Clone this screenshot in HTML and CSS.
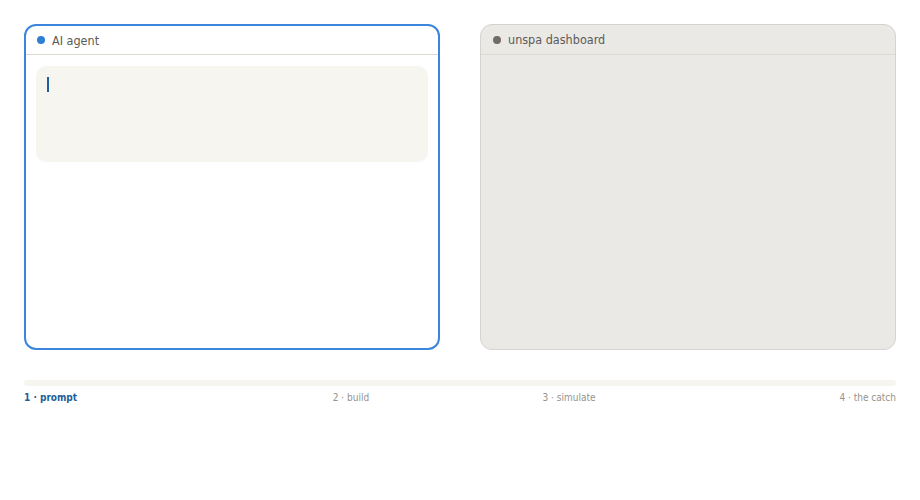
FILE: index.html
```html
<!DOCTYPE html>
<html>
<head>
<meta charset="utf-8">
<link rel="stylesheet" href="styles.css">
</head>
<body>
<div class="page">
  <div class="panels">
    <div class="card card-agent">
      <div class="card-head"><span class="dot dot-blue"></span><span class="title">AI agent</span></div>
      <div class="card-body">
        <div class="prompt"><span class="caret"></span></div>
      </div>
    </div>
    <div class="card card-dash">
      <div class="card-head"><span class="dot dot-grey"></span><span class="title">unspa dashboard</span></div>
      <div class="card-body"></div>
    </div>
  </div>
  <div class="progress"></div>
  <div class="steps">
    <span class="step step-1 active">1 · prompt</span>
    <span class="step step-2">2 · build</span>
    <span class="step step-3">3 · simulate</span>
    <span class="step step-4">4 · the catch</span>
  </div>
</div>
</body>
</html>
```

FILE: styles.css
```css
html, body {
  margin: 0;
  padding: 0;
  background: #ffffff;
  font-family: "DejaVu Sans Condensed", "DejaVu Sans", "Liberation Sans", sans-serif;
  font-stretch: condensed;
}
.page {
  padding: 24px;
  width: 872px;
}
.panels {
  display: grid;
  grid-template-columns: 416px 416px;
  gap: 40px;
}
.card {
  height: 326px;
  box-sizing: border-box;
  border-radius: 12px;
  display: flex;
  flex-direction: column;
  overflow: hidden;
}
.card-agent {
  border: 2px solid #3a86dc;
  background: #ffffff;
}
.card-dash {
  border: 1px solid #d5d3cd;
  background: #eae9e6;
}
.card-head {
  height: 29px;
  display: flex;
  align-items: center;
  padding-left: 12px;
  border-bottom: 1px solid #dcdad3;
  flex-shrink: 0;
}
.card-agent .card-head {
  height: 28px;
  padding-left: 11px;
}
.dot {
  width: 8px;
  height: 8px;
  border-radius: 50%;
  margin-right: 7px;
}
.dot-blue { background: #2f7fd6; }
.dot-grey { background: #6f6d69; }
.title {
  font-size: 12.5px;
  color: #5d5b57;
}
.card-body {
  flex: 1;
  padding: 11px;
}
.card-agent .card-body {
  padding: 11px 10px;
}
.prompt {
  height: 96px;
  background: #f6f5f0;
  border-radius: 10px;
  padding: 11px 11px;
  box-sizing: border-box;
}
.caret {
  display: block;
  width: 2px;
  height: 15px;
  background: #1f5f99;
}
.progress {
  margin-top: 30px;
  height: 6px;
  border-radius: 3px;
  background: #f6f5f0;
}
.steps {
  display: grid;
  grid-template-columns: repeat(4, 1fr);
  margin-top: 6px;
  font-size: 10px;
  color: #95938e;
  line-height: 12px;
}
.step-1 { text-align: left; }
.step-2, .step-3 { text-align: center; }
.step-4 { text-align: right; }
.step.active {
  color: #1f5f99;
  font-weight: bold;
}
```
